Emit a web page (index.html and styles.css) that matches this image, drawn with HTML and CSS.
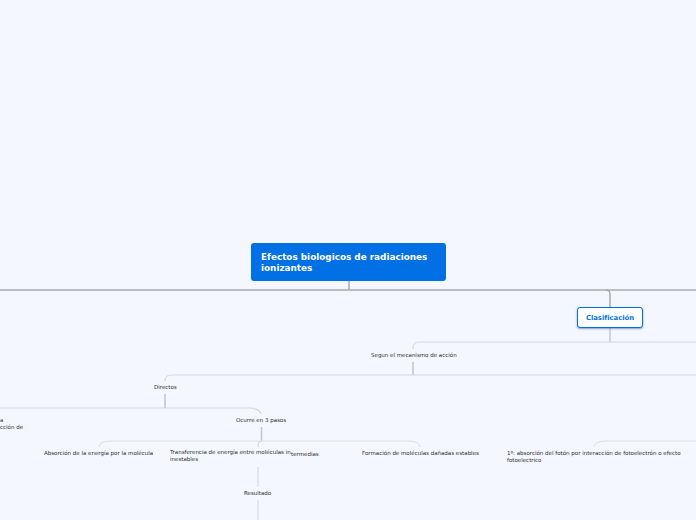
FILE: index.html
```html
<!DOCTYPE html>
<html lang="es">
<head>
<meta charset="utf-8">
<title>Efectos biologicos de radiaciones ionizantes</title>
<link rel="stylesheet" href="styles.css">
</head>
<body>
<main class="canvas">
  <svg class="links" width="696" height="520" viewBox="0 0 696 520" fill="none">
    <path class="main" d="M349 281V290M0 290H606Q610 290 610 294V307"/>
    <path class="main" d="M606 290H696"/>
    <path class="mid" d="M610 328V342"/>
    <path class="sub" d="M696 342H419Q413 342 413 348V375"/>
    <path class="sub" d="M696 375H171Q165 375 165 381V408"/>
    <path class="sub" d="M0 408H248Q261 408 261.500 416V441"/>
    <path class="mid" d="M413 352V375M165 390V408M261.500 424V441"/>
    <path class="thin" d="M99 447Q99 441 112 441H407Q420 441 420 447"/>
    <path class="thin" d="M594 447Q594 441 607 441H696"/>
    <path class="drop" d="M258 520V445Q258 441 262 441"/>
  </svg>

  <div class="root">Efectos biologicos de radiaciones ionizantes</div>
  <div class="branch">Clasificación</div>

  <div class="label n1">Segun el mecanismo de acción</div>
  <div class="label n2">Directos</div>
  <div class="label n3">Ocurre en 3 pasos</div>
  <div class="label n4">a<br>cción de</div>
  <div class="label n5">Absorción de la energía por la molécula</div>
  <div class="label n6">Transferencia de energía entre moléculas in<br>inestables</div>
  <div class="label n10">termedias</div>
  <div class="label n7">Formación de moléculas dañadas estables</div>
  <div class="label n8">Resultado</div>
  <div class="label n9">1º: absorción del fotón por interacción de fotoelectrón o efecto<br>fotoelectrico</div>
</main>
</body>
</html>
```
FILE: styles.css
```css
html, body {
  margin: 0;
  padding: 0;
  background: #f4f7ff;
  overflow: hidden;
}

.canvas {
  position: relative;
  width: 696px;
  height: 520px;
  overflow: hidden;
  font-family: "DejaVu Sans", sans-serif;
}

.links {
  position: absolute;
  left: 0;
  top: 0;
}

.main {
  stroke: #a9abb0;
  stroke-width: 1.5;
}

.mid {
  stroke: #c6c8ce;
  stroke-width: 1.5;
}

.sub {
  stroke: #d5d7de;
  stroke-width: 1.2;
}

.thin {
  stroke: #dcdfe8;
  stroke-width: 1;
}

.drop {
  stroke: #d2d4dc;
  stroke-width: 1;
}

.root {
  position: absolute;
  left: 251px;
  top: 243px;
  width: 195px;
  height: 38px;
  box-sizing: border-box;
  padding: 9px 10px;
  background: #0070e4;
  border-radius: 3px;
  color: #fff;
  font-size: 8.85px;
  font-weight: 700;
  line-height: 11px;
}

.branch {
  position: absolute;
  left: 577px;
  top: 307px;
  width: 66px;
  height: 21px;
  box-sizing: border-box;
  border: 1px solid #0070e4;
  border-radius: 3px;
  background: #fff;
  box-shadow: 0 1px 2px rgba(0, 60, 130, .45);
  color: #0070e4;
  font-size: 6.8px;
  font-weight: 700;
  line-height: 20px;
  text-align: center;
}

.label {
  position: absolute;
  color: #2b2e35;
  font-size: 5.5px;
  line-height: 7px;
  white-space: nowrap;
  background: #f4f7ff;
  padding: 3px 0;
}

.n1 { left: 371px; top: 349px; }
.n2 { left: 154px; top: 381px; }
.n3 { left: 236px; top: 414px; }
.n4 { left: 0; top: 414px; }
.n5 { left: 44px; top: 447px; }
.n6 { left: 170px; top: 447px; padding: 2px 0 4px; }
.n7 { left: 362px; top: 447px; }
.n8 { left: 244px; top: 487px; }
.n9 { left: 507px; top: 447px; padding: 3px 0 0; }
.n10 { left: 291px; top: 447px; padding: 4px 0 0; background: none; }
```
